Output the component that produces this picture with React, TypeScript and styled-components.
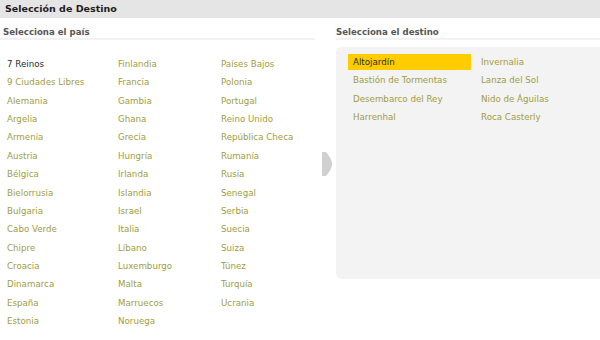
import styled, { createGlobalStyle } from "styled-components"

const GlobalStyle = createGlobalStyle`
  body {
    margin: 0;
    background: #fff;
    font-family: "DejaVu Sans", Verdana, sans-serif;
  }
`

const countries = [
  "7 Reinos", "9 Ciudades Libres", "Alemania", "Argelia", "Armenia", "Austria", "Bélgica",
  "Bielorrusia", "Bulgaria", "Cabo Verde", "Chipre", "Croacia", "Dinamarca", "España", "Estonia",
  "Finlandia", "Francia", "Gambia", "Ghana", "Grecia", "Hungría", "Irlanda", "Islandia", "Israel",
  "Italia", "Líbano", "Luxemburgo", "Malta", "Marruecos", "Noruega",
  "Países Bajos", "Polonia", "Portugal", "Reino Unido", "República Checa", "Rumanía", "Rusia",
  "Senegal", "Serbia", "Suecia", "Suiza", "Túnez", "Turquía", "Ucrania",
]

const destinations = [
  "Altojardín", "Bastión de Tormentas", "Desembarco del Rey", "Harrenhal",
  "Invernalia", "Lanza del Sol", "Nido de Águilas", "Roca Casterly",
]

const Page = styled.div`
  width: 600px;
  height: 340px;
  overflow: hidden;
`

const Header = styled.div`
  height: 18px;
  line-height: 17px;
  padding-left: 5px;
  background: #e5e5e5;
  color: #1c1c1c;
  font-size: 9.5px;
  font-weight: bold;
`

const Body = styled.div`
  display: flex;
`

const LeftPanel = styled.div`
  width: 315px;
  flex-shrink: 0;
`

const Middle = styled.div`
  width: 21px;
  flex-shrink: 0;
  padding: 134px 0 0 7px;
  box-sizing: border-box;
`

const RightPanel = styled.div`
  flex: 1;
  min-width: 0;
`

const SubTitle = styled.div<{ $indent: number }>`
  height: 22px;
  padding: 8px 0 0 ${(p) => p.$indent}px;
  box-sizing: border-box;
  border-bottom: 2px solid #f2f2f2;
  line-height: 12px;
  color: #555;
  font-size: 8.6px;
  font-weight: bold;
`

const CountryGrid = styled.div`
  display: grid;
  grid-auto-flow: column;
  grid-template-rows: repeat(15, 18.36px);
  grid-template-columns: 111px 103px 1fr;
  padding: 15px 0 0 7px;
`

const Item = styled.div<{ $selected?: boolean }>`
  font-size: 8.7px;
  line-height: 18.36px;
  white-space: nowrap;
  color: ${(p) => (p.$selected ? "#2a2a2a" : "#a09d3e")};
  cursor: pointer;
`

const DestBox = styled.div`
  margin: 7px -10px 0 0;
  height: 232px;
  padding: 7px 0 0 12px;
  box-sizing: border-box;
  background: #f3f3f3;
  border-radius: 6px;
`

const DestGrid = styled.div`
  display: grid;
  grid-auto-flow: column;
  grid-template-rows: repeat(4, 16px);
  grid-template-columns: 123px 123px;
  column-gap: 5px;
  row-gap: 2.4px;
`

const DestItem = styled.div<{ $selected?: boolean }>`
  padding-left: 5px;
  font-size: 8.7px;
  line-height: 17px;
  white-space: nowrap;
  background: ${(p) => (p.$selected ? "#ffcc00" : "transparent")};
  color: ${(p) => (p.$selected ? "#2a2a2a" : "#a09d3e")};
  cursor: pointer;
`

const Arrow = () => (
  <svg width="11" height="24" viewBox="0 0 11 24">
    <path d="M0 0 L4 0 Q10 7 10 12 Q10 17 4 24 L0 24 Z" fill="#d0d0d0" />
  </svg>
)

export default function App() {
  return (
    <Page>
      <GlobalStyle />
      <Header>Selección de Destino</Header>
      <Body>
        <LeftPanel>
          <SubTitle $indent={3}>Selecciona el país</SubTitle>
          <CountryGrid>
            {countries.map((c, i) => (
              <Item key={c} $selected={i === 0}>{c}</Item>
            ))}
          </CountryGrid>
        </LeftPanel>
        <Middle>
          <Arrow />
        </Middle>
        <RightPanel>
          <SubTitle $indent={0}>Selecciona el destino</SubTitle>
          <DestBox>
            <DestGrid>
              {destinations.map((d, i) => (
                <DestItem key={d} $selected={i === 0}>{d}</DestItem>
              ))}
            </DestGrid>
          </DestBox>
        </RightPanel>
      </Body>
    </Page>
  )
}
